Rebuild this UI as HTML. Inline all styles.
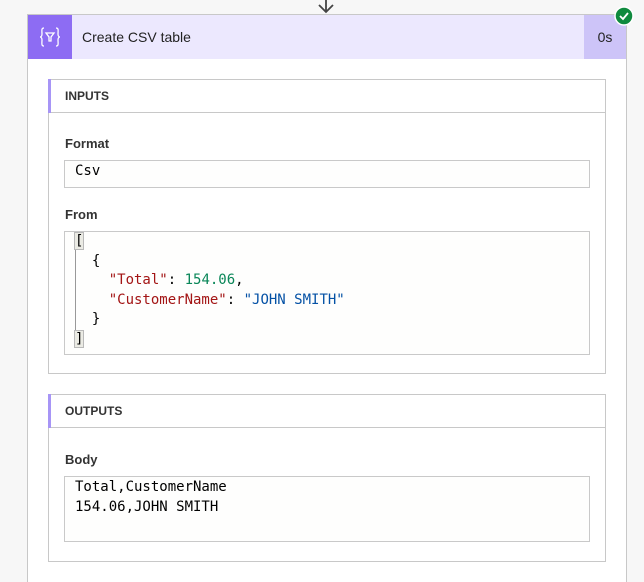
<!DOCTYPE html>
<html><head><meta charset="utf-8"><style>
*{margin:0;padding:0;box-sizing:border-box}
html,body{width:644px;height:582px;overflow:hidden}
body{background:#f7f7f7;font-family:"Liberation Sans",Arial,sans-serif;position:relative}
.abs{position:absolute}
.card{left:27px;top:14px;width:600px;height:570px;background:#fff;border:1px solid #c8c8c8}
.hdr{left:28px;top:15px;width:598px;height:44px;background:#ece8fe}
.ico{left:28px;top:15px;width:44px;height:44px;background:#8d6cf3}
.time{left:584px;top:16px;width:42px;height:44px;background:#cdc4f8;font-size:14px;color:#222;line-height:44px;text-align:center}
.title{left:82px;top:15px;line-height:44px;font-size:14px;color:#222}
.sec{background:#fff;border:1px solid #c8c8c8}
.sech{border-bottom:1px solid #c8c8c8}
.bar{width:3px;background:#a795f6}
.lbl{font-size:13px;font-weight:bold;color:#333}
.box{background:#fefefd;border:1px solid #c9c9c9}
.mono{font-family:"DejaVu Sans Mono","Liberation Mono",monospace;font-size:14px;color:#000;white-space:pre;line-height:19.5px}
.k{color:#a31515}.n{color:#098658}.s{color:#0451a5}
.br{background:#ebebe4;outline:1px solid #b9b9b9}
</style></head><body>
<svg class="abs" style="left:315px;top:0" width="22" height="14" viewBox="0 0 22 14"><path d="M11 0V12M4 5L11 12L18 5" stroke="#444" stroke-width="1.8" fill="none"/></svg>
<div class="abs card"></div>
<div class="abs hdr"></div>
<div class="abs ico"></div>
<svg class="abs" style="left:28px;top:15px" width="44" height="44" viewBox="0 0 44 44"><g stroke="#fff" stroke-width="1.3" fill="none"><path d="M16 13C13 13 14 16 14 19C14 21 13 22 12 22C13 22 14 23 14 25C14 28 13 31 16 31"/><path d="M28 13C31 13 30 16 30 19C30 21 31 22 32 22C31 22 30 23 30 25C30 28 31 31 28 31"/><path d="M18 18H26L23 22V26H21V22Z"/></g></svg>
<div class="abs title">Create CSV table</div>
<div class="abs time" style="top:15px">0s</div>
<svg class="abs" style="left:614px;top:6px" width="20" height="20" viewBox="0 0 20 20"><circle cx="10" cy="10" r="9" fill="#0f8a3e" stroke="#fff" stroke-width="1.5"/><path d="M6 10L9 13L14 7" stroke="#fff" stroke-width="1.8" fill="none"/></svg>

<div class="abs sec" style="left:48px;top:79px;width:558px;height:295px"></div>
<div class="abs sech" style="left:48px;top:79px;width:558px;height:34px"></div>
<div class="abs bar" style="left:48px;top:79px;height:34px"></div>
<div class="abs lbl" style="left:65px;top:89px;font-size:12px">INPUTS</div>
<div class="abs lbl" style="left:65px;top:136px">Format</div>
<div class="abs box" style="left:64px;top:160px;width:526px;height:28px"></div>
<div class="abs mono" style="left:75px;top:162px">Csv</div>
<div class="abs lbl" style="left:65px;top:207px">From</div>
<div class="abs box" style="left:64px;top:231px;width:526px;height:124px"></div>
<div class="abs" style="left:75px;top:244px;width:1px;height:92px;background:#999"></div>
<div class="abs mono" style="left:75px;top:232px"><span class="br">[</span>
  {
    <span class="k">"Total"</span>: <span class="n">154.06</span>,
    <span class="k">"CustomerName"</span>: <span class="s">"JOHN SMITH"</span>
  }
<span class="br">]</span></div>

<div class="abs sec" style="left:48px;top:394px;width:558px;height:168px"></div>
<div class="abs sech" style="left:48px;top:394px;width:558px;height:34px"></div>
<div class="abs bar" style="left:48px;top:394px;height:34px"></div>
<div class="abs lbl" style="left:65px;top:404px;font-size:12px">OUTPUTS</div>
<div class="abs lbl" style="left:65px;top:452px">Body</div>
<div class="abs box" style="left:64px;top:476px;width:526px;height:66px"></div>
<div class="abs mono" style="left:75px;top:478px">Total,CustomerName
154.06,JOHN SMITH</div>
</body></html>
